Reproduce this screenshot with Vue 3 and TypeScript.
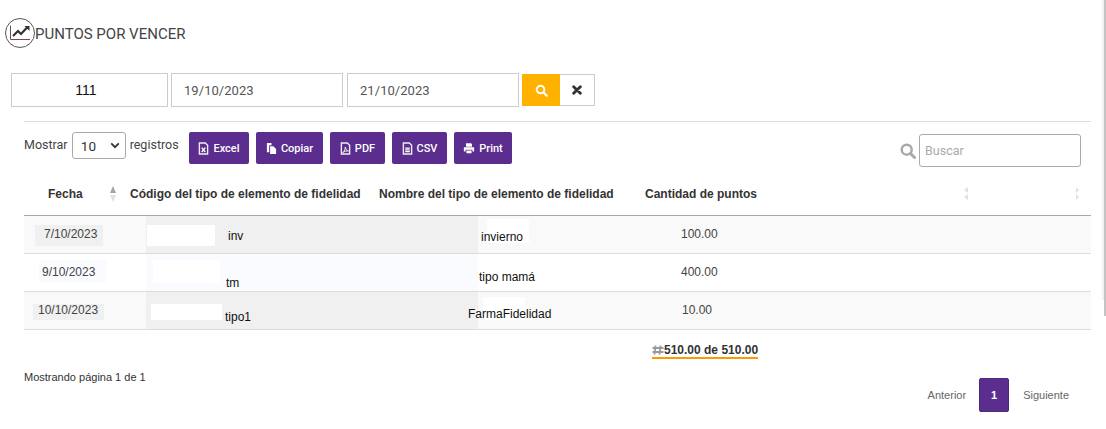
<script setup lang="ts">
interface Patch { x: number; y: number; w: number; h: number; c: string }
interface Cell { text: string; x: number; y: number; patch?: Patch }
const white = '#ffffff'
const rows: { cls: string; cells: Cell[] }[] = [
  { cls: 'odd', cells: [
    { text: '7/10/2023', x: 20, y: 11, patch: { x: 11, y: 9, w: 68, h: 21, c: '#f0f0f0' } },
    { text: 'inv', x: 82, y: 13, patch: { x: 1, y: 9, w: 68, h: 21, c: white } },
    { text: 'invierno', x: 3, y: 14, patch: { x: 9, y: 3, w: 42, h: 24, c: white } },
    { text: '100.00', x: 19, y: 11 } ] },
  { cls: 'even', cells: [
    { text: '9/10/2023', x: 18, y: 11, patch: { x: 15, y: 6, w: 67, h: 23, c: '#fafbff' } },
    { text: 'tm', x: 80, y: 22, patch: { x: 7, y: 6, w: 67, h: 23, c: white } },
    { text: 'tipo mamá', x: 1, y: 16 },
    { text: '400.00', x: 19, y: 11 } ] },
  { cls: 'odd', cells: [
    { text: '10/10/2023', x: 14, y: 11, patch: { x: 9, y: 12, w: 71, h: 16, c: '#f0f0f0' } },
    { text: 'tipo1', x: 79, y: 18, patch: { x: 5, y: 12, w: 71, h: 16, c: white } },
    { text: 'FarmaFidelidad', x: -10, y: 15, patch: { x: 5, y: 5, w: 42, h: 23, c: white } },
    { text: '10.00', x: 20, y: 11 } ] },
]
const exportButtons = [
  { label: 'Excel', w: 60, icon: 'x' },
  { label: 'Copiar', w: 67, icon: 'c' },
  { label: 'PDF', w: 55, icon: 'p' },
  { label: 'CSV', w: 55, icon: 's' },
  { label: 'Print', w: 58, icon: 'r' },
]
</script>

<template>
  <div class="page">
    <main class="main">
      <header class="title">
        <svg class="title-icon" viewBox="0 0 30 30" width="30" height="30">
          <circle cx="15" cy="15" r="14.500" fill="none" stroke="#555" stroke-width="1" />
          <path d="M5.500 7.500V21.500H25" fill="none" stroke="#6a5050" stroke-width="1" />
          <path d="M8 18l5-5 3 3 6-6.500" fill="none" stroke="#333" stroke-width="2.200" />
          <path d="M19.500 8H24.500V13Z" fill="#333" />
        </svg>
        <h1>PUNTOS POR VENCER</h1>
      </header>

      <section class="filters">
        <div class="field code">111</div>
        <div class="field date first">19/10/2023</div>
        <div class="field date">21/10/2023</div>
        <button class="go" type="button" aria-label="Buscar">
          <svg viewBox="0 0 16 16" width="13" height="13"><circle cx="6.800" cy="6.800" r="4.700" fill="none" stroke="#fff" stroke-width="2.400" /><path d="M10.500 10.500l4 4" stroke="#fff" stroke-width="2.800" stroke-linecap="round" /></svg>
        </button>
        <button class="clear" type="button" aria-label="Limpiar">
          <svg viewBox="0 0 12 12" width="10" height="10"><path d="M2 2l8 8M10 2l-8 8" stroke="#333" stroke-width="3.400" stroke-linecap="round" /></svg>
        </button>
      </section>

      <section class="panel">
        <div class="toolbar">
          <div class="length">
            <span>Mostrar</span>
            <div class="select">10
              <svg viewBox="0 0 12 8" width="10" height="7"><path d="M1.500 1.500L6 6l4.500-4.500" fill="none" stroke="#333" stroke-width="2.200" /></svg>
            </div>
            <span>registros</span>
          </div>
          <div class="exports">
            <button v-for="b in exportButtons" :key="b.label" class="export" type="button" :style="{ width: b.w + 'px' }">
              <svg v-if="b.icon === 'r'" viewBox="0 0 14 14" width="12" height="12"><path d="M3.500 1.500h6l1 1v3h-7zM1 6h12v5h-2V9H3v2H1zM4 10h6v3H4z" fill="#fff" /></svg>
              <svg v-else viewBox="0 0 12 14" width="11" height="13">
                <template v-if="b.icon === 'c'">
                  <path d="M1 1h5v2.500H3.500V11H1z" fill="#fff" />
                  <path d="M4.500 4.500H8L11 7.500V13H4.500z" fill="#fff" />
                </template>
                <template v-else>
                  <path d="M1.500 1h6.500l2.500 2.500V13h-9z" fill="none" stroke="#eee" stroke-width="1.500" />
                  <path v-if="b.icon === 'x'" d="M4 6l4 5M8 6l-4 5" stroke="#fff" stroke-width="1.500" />
                  <path v-if="b.icon === 'p'" d="M3 11.500C5 10 6 7 5.700 5.500c.8 2.500 2 3.800 3.500 4.200-2-.3-4 .3-6.200 1.800z" fill="none" stroke="#fff" stroke-width="1" />
                  <path v-if="b.icon === 's'" d="M3.500 6.500h5M3.500 8.500h5M3.500 10.500h5" stroke="#fff" stroke-width="1.300" />
                </template>
              </svg>
              <span>{{ b.label }}</span>
            </button>
          </div>
          <div class="search">
            <svg viewBox="0 0 16 16" width="16" height="16"><circle cx="6.700" cy="6.700" r="5" fill="none" stroke="#a9a9a9" stroke-width="2.500" /><path d="M10.500 10.500l4 4" stroke="#a9a9a9" stroke-width="3" stroke-linecap="round" /></svg>
            <div class="search-box">Buscar</div>
          </div>
        </div>

        <div class="head">
          <div class="th th-date">Fecha
            <span class="sort"><i class="up"></i><i class="down"></i></span>
          </div>
          <div class="th th-code">Código del tipo de elemento de fidelidad</div>
          <div class="th th-name">Nombre del tipo de elemento de fidelidad</div>
          <div class="th th-qty">Cantidad de puntos</div>
          <div class="th th-rest">
            <span class="sort faint"><i class="left"></i><i class="left"></i></span>
            <span class="sort faint"><i class="left rt"></i><i class="left rt"></i></span>
          </div>
        </div>

        <div v-for="(row, r) in rows" :key="r" class="row" :class="row.cls">
          <div v-for="(cell, c) in row.cells" :key="c" class="td" :class="'c' + c">
            <span v-if="cell.patch" class="patch" :style="{ left: cell.patch.x + 'px', top: cell.patch.y + 'px', width: cell.patch.w + 'px', height: cell.patch.h + 'px', background: cell.patch.c }"></span>
            <span class="val" :style="{ marginLeft: cell.x + 'px', marginTop: cell.y + 'px' }">{{ cell.text }}</span>
          </div>
        </div>

        <div class="total">
          <p class="sum">
            <svg class="hash" viewBox="0 0 12 12" width="12" height="12"><path d="M3.500 1.500L2.500 10.500M8.500 1.500L7.500 10.500M.5 4h11M.5 8h11" fill="none" stroke="#999" stroke-width="1.800" /></svg>510.00 de 510.00
          </p>
        </div>

        <div class="foot">
          <p class="info">Mostrando página 1 de 1</p>
          <nav class="pager">
            <span>Anterior</span>
            <span class="current">1</span>
            <span>Siguiente</span>
          </nav>
        </div>
      </section>
    </main>
    <div class="scrollbar"><i class="track"></i><i class="thumb"></i></div>
  </div>
</template>

<style>
html, body { margin: 0; background: #fff; overflow: hidden; }
</style>

<style scoped>
.page { display: flex; width: 1106px; height: 429px; overflow: hidden; font-family: "Liberation Sans", Arial, sans-serif; color: #333; }
.main { width: 1102px; flex: none; }
.scrollbar { display: flex; width: 4px; align-items: flex-start; }
.track { display: block; width: 2px; height: 300px; background: #f1f1f1; }
.thumb { display: block; width: 2px; height: 316px; background: #c4c4c4; }

.title { display: flex; align-items: center; padding: 17px 0 0 5px; height: 31px; }
.title-icon { flex: none; }
.title h1 { margin: 3px 0 0; font: 400 15px "Roboto", sans-serif; color: #444; }

.filters { display: flex; align-items: center; padding: 25px 0 0 11px; }
.field { box-sizing: border-box; height: 34px; border: 1px solid #ccc; display: flex; align-items: center; font-size: 13px; background: #fff; }
.code { width: 157px; justify-content: center; padding-right: 7px; font: 14px "Liberation Sans", sans-serif; color: #111; }
.date { width: 172px; margin-left: 4px; padding-left: 12px; font-family: "Roboto", sans-serif; color: #555; letter-spacing: .05px; }
.date.first { margin-left: 3px; }
.go { box-sizing: border-box; width: 38px; height: 32px; margin-left: 3px; border: 0; padding: 0; background: #ffb100; display: flex; align-items: center; justify-content: center; }
.clear { box-sizing: border-box; width: 35px; height: 32px; border: 1px solid #ccc; border-left: 0; padding: 0; background: #fff; display: flex; align-items: center; justify-content: center; }

.panel { margin: 14px 0 0 24px; width: 1067px; border-top: 1px solid #ddd; }
.toolbar { box-sizing: border-box; display: flex; padding-top: 10px; height: 44px; }
.length { display: flex; align-items: flex-start; gap: 4px; width: 165px; font: 12.500px/27px "Roboto", sans-serif; color: #444; }
.length span { line-height: 26px; }
.select { box-sizing: border-box; width: 54px; height: 27px; border: 1px solid #aaa; border-radius: 3px; display: flex; justify-content: space-between; align-items: center; padding: 0 5px 0 8px; font: 13.500px "Roboto", sans-serif; color: #333; background: #fff; letter-spacing: .4px; }
.exports { display: flex; gap: 7px; }
.export { box-sizing: border-box; height: 32px; padding: 0; border: 0; border-radius: 2px; background: #5b2d8e; color: #fff; display: flex; align-items: center; justify-content: center; gap: 4px; font: 500 11px "Roboto", sans-serif; }
.search { margin-left: auto; margin-right: 10px; display: flex; align-items: center; gap: 3px; height: 33px; margin-top: 2px; }
.search-box { box-sizing: border-box; width: 162px; height: 33px; border: 1px solid #aaa; border-radius: 3px; padding-left: 5px; display: flex; align-items: center; font: 12.500px "Roboto", sans-serif; color: #aaa; }

.head { box-sizing: border-box; display: grid; grid-template-columns: 100px 252px 259px 321px 135px; height: 50px; padding-top: 7px; align-items: center; border-bottom: 1px solid #aaa; font-weight: 700; font-size: 12px; color: #333; }
.th { white-space: nowrap; }
.th-date { padding-left: 24px; display: flex; align-items: center; position: relative; }
.th-code { padding-left: 6px; }
.th-name { padding-left: 3px; }
.th-qty { padding-left: 10px; }
.sort { display: inline-flex; flex-direction: column; gap: 2px; position: absolute; left: 86px; top: -1px; }
.sort i { display: block; width: 0; height: 0; border-left: 3.500px solid transparent; border-right: 3.500px solid transparent; }
.up { border-bottom: 7px solid #a5a5a5; }
.down { border-top: 7px solid #e0e0e0; }
.th-rest { position: relative; height: 14px; }
.sort.faint { left: 8px; top: 0; gap: 1px; }
.sort.faint i { border-left: 0; border-right: 4px solid #e2e2e2; border-top: 3.500px solid transparent; border-bottom: 3.500px solid transparent; }
.sort.faint + .sort.faint { left: 120px; }
.sort.faint i.rt { border-right: 0; border-left: 3px solid #e2e2e2; }

.row { display: grid; grid-template-columns: 122px 332px 184px 1fr; height: 38px; box-sizing: border-box; border-bottom: 1px solid #ddd; font-size: 12px; }
.row:last-of-type { border-bottom-color: #aaa; }
.td { position: relative; display: block; white-space: nowrap; color: #111; }
.c0, .c3 { color: #444; }
.val { position: relative; display: inline-block; }
.odd .td { background: #f9f9f9; }
.odd .c1 { background: #f0f0f0; }
.even .td { background: #fff; }
.even .c1 { background: #fafbff; }
.patch { position: absolute; }

.total { display: flex; padding: 13px 0 0 628px; }
.sum { display: flex; align-items: center; margin: 0; font-size: 12px; font-weight: 700; line-height: 14px; border-bottom: 2px solid #f90; color: #333; }
.hash { flex: none; }

.foot { display: flex; justify-content: space-between; padding-right: 22px; }
.info { margin: 12px 0 0; font-size: 11px; color: #333; }
.pager { display: flex; align-items: center; gap: 13px; margin-top: 19px; font-size: 11px; color: #666; }
.current { box-sizing: border-box; width: 30px; height: 34px; margin-right: 1px; background: #5b2d8e; border: 1px solid #4b2a78; border-radius: 2px; color: #fff; display: flex; align-items: center; justify-content: center; font-weight: 700; }
</style>
